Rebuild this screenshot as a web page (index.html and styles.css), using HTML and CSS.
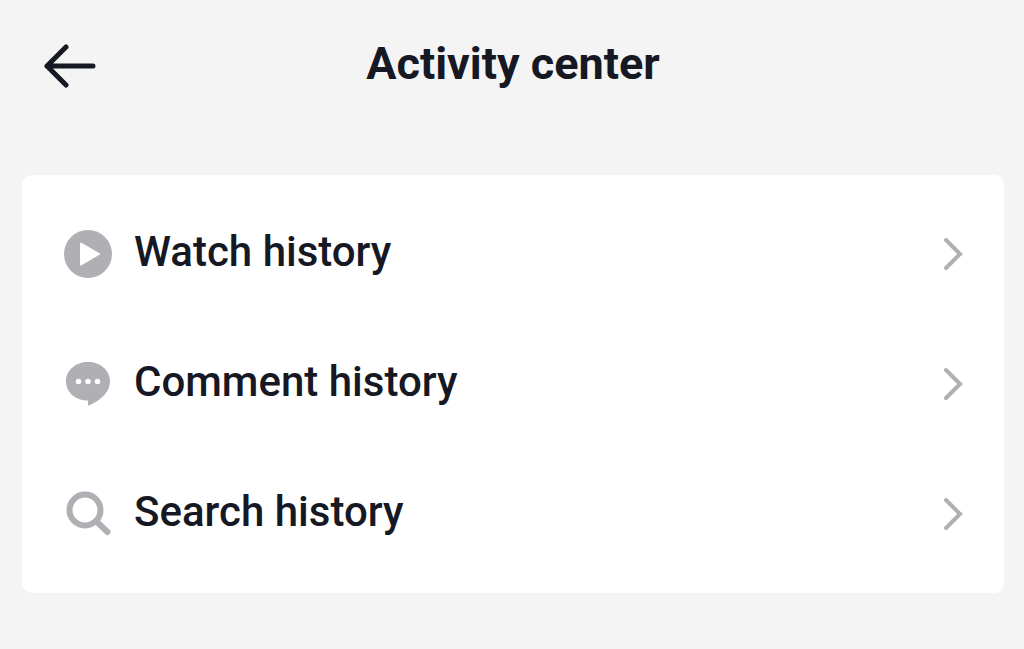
FILE: index.html
```html
<!DOCTYPE html>
<html lang="en">
<head>
    <meta charset="UTF-8">
    <meta name="viewport" content="width=device-width, initial-scale=1.0">
    <title>Activity center</title>
    <link rel="stylesheet" href="styles.css">
</head>
<body>
    <header class="header">
        <button type="button" class="back-btn" aria-label="Back">
            <svg width="52" height="44" viewBox="0 0 52 44">
                <path d="M22 3 L3 22 L22 41 M3 22 H49" fill="none" stroke="currentColor" stroke-width="5" stroke-linecap="round" stroke-linejoin="round"/>
            </svg>
        </button>
        <h1 class="title">Activity center</h1>
    </header>
    <main class="card">
        <a href="#watch" class="row">
            <svg class="icon" viewBox="0 0 48 48">
                <circle cx="24" cy="24" r="24" fill="currentColor"/>
                <path d="M17 13.5 L35 24 L17 34.5 Z" fill="#fff" stroke="#fff" stroke-width="2" stroke-linejoin="round"/>
            </svg>
            <span class="label">Watch history</span>
            <svg class="chevron" viewBox="0 0 20 34"><path d="M2 3 L16 17 L2 31"/></svg>
        </a>
        <a href="#comments" class="row">
            <svg class="icon" viewBox="0 0 48 48">
                <path d="M24 2 C36 2 46 10 46 21 C46 32 37 40 26 45 C24.5 45.7 24 45.5 24 44 V40.5 C11 40.5 2 32 2 21 C2 10 12 2 24 2 Z" fill="currentColor"/>
                <g fill="#fff">
                    <circle cx="14.5" cy="21.5" r="2.8"/>
                    <circle cx="24" cy="21.5" r="2.8"/>
                    <circle cx="33.5" cy="21.5" r="2.8"/>
                </g>
            </svg>
            <span class="label">Comment history</span>
            <svg class="chevron" viewBox="0 0 20 34"><path d="M2 3 L16 17 L2 31"/></svg>
        </a>
        <a href="#searches" class="row">
            <svg class="icon" viewBox="0 0 48 48">
                <circle cx="21" cy="20" r="15.5" fill="none" stroke="currentColor" stroke-width="6"/>
                <path d="M32 31 L43.5 42" stroke="currentColor" stroke-width="6" stroke-linecap="round"/>
            </svg>
            <span class="label">Search history</span>
            <svg class="chevron" viewBox="0 0 20 34"><path d="M2 3 L16 17 L2 31"/></svg>
        </a>
    </main>
</body>
</html>
```
FILE: styles.css
```css
body {
    margin: 0;
    background: #f4f4f4;
    color: #161823;
    font-family: Roboto, "Liberation Sans", sans-serif;
}

.header {
    display: grid;
    grid-template-columns: 52px 1fr 52px;
    align-items: center;
    height: 131px;
    padding: 0 42px 0 44px;
}

.back-btn {
    display: flex;
    padding: 0;
    border: none;
    background: none;
    color: inherit;
    cursor: pointer;
}

.title {
    margin: 0;
    padding-bottom: 4px;
    font-size: 45px;
    font-weight: 700;
    line-height: 52px;
    text-align: center;
}

.card {
    margin: 44px 20px 44px 22px;
    padding: 14px 0;
    border-radius: 10px;
    background: #fff;
}

.row {
    display: flex;
    align-items: center;
    gap: 22px;
    height: 130px;
    padding: 0 40px 0 42px;
    color: inherit;
    text-decoration: none;
}

.icon {
    flex: none;
    width: 48px;
    height: 48px;
    color: #afafb4;
}

.label {
    flex: 1;
    padding-bottom: 4px;
    font-size: 42px;
    font-weight: 500;
    line-height: 50px;
}

.chevron {
    flex: none;
    width: 20px;
    height: 34px;
    fill: none;
    stroke: #afafb4;
    stroke-width: 4;
    stroke-linecap: round;
}
```
